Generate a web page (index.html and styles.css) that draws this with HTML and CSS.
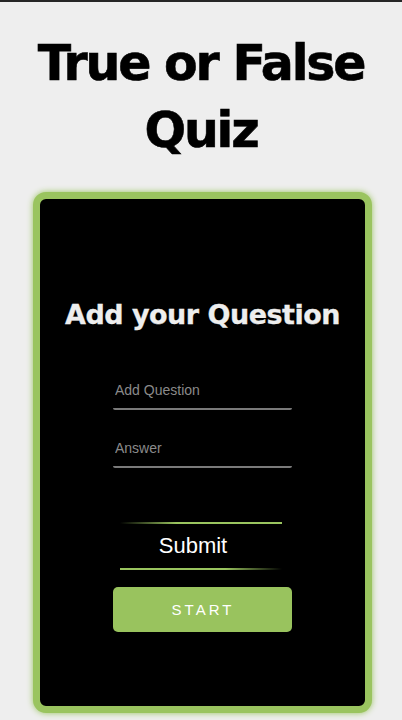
FILE: index.html
```html
<!DOCTYPE html>
<html>
<head>
<meta charset="utf-8">
<link rel="stylesheet" href="styles.css">
</head>
<body>
<div class="page">
  <h1 class="title">True or False Quiz</h1>
  <div class="card">
    <h2 class="card-title">Add your Question</h2>
    <div class="form">
      <div class="field"><input class="input" type="text" placeholder="Add Question"></div>
      <div class="field"><input class="input" type="text" placeholder="Answer"></div>
      <div class="submit">
        <span class="line line-top"></span>
        <span class="submit-text">Submit</span>
        <span class="line line-bottom"></span>
      </div>
      <button class="start">START</button>
    </div>
  </div>
</div>
</body>
</html>
```

FILE: styles.css
```css
html, body {
  margin: 0;
  padding: 0;
}
body {
  background: #eeeeee;
  border-top: 2px solid #262626;
  font-family: "Liberation Sans", Arial, sans-serif;
  height: 718px;
  overflow: hidden;
}
.page {
  display: flex;
  flex-direction: column;
  align-items: center;
}
.title {
  margin: 28px 0 0;
  width: 360px;
  text-align: center;
  font-family: "DejaVu Sans", sans-serif;
  font-weight: 700;
  font-size: 49px;
  line-height: 67px;
  color: #000;
  letter-spacing: -2.2px;
  -webkit-text-stroke: 0.6px #000;
}
.card {
  margin-top: 28px;
  margin-left: 3px;
  width: 325px;
  height: 507px;
  background: #000;
  border: 7px solid #9ac45f;
  border-radius: 13px;
  box-shadow: 0 0 6px #9ac45f;
  display: flex;
  flex-direction: column;
  align-items: center;
  box-sizing: content-box;
}
.card-title {
  margin: 100px 0 0;
  font-family: "DejaVu Sans", sans-serif;
  font-weight: 700;
  font-size: 27px;
  color: #eeeeee;
  letter-spacing: -0.5px;
  -webkit-text-stroke: 0.3px #eee;
}
.form {
  width: 179px;
  margin-top: 42px;
  display: flex;
  flex-direction: column;
}
.field {
  height: 58px;
}
.input {
  width: 100%;
  box-sizing: border-box;
  background: transparent;
  border: none;
  border-bottom: 2px solid #7a7a7a;
  border-radius: 2px;
  padding: 10px 2px 10px;
  font-family: "Liberation Sans", Arial, sans-serif;
  font-size: 14px;
  color: #fff;
  outline: none;
}
.input::placeholder {
  color: #8a8a8a;
}
.submit {
  margin-top: 34px;
  display: flex;
  flex-direction: column;
  align-items: center;
  width: 162px;
  align-self: center;
  margin-left: -3px;
}
.line {
  display: block;
  height: 2px;
  width: 100%;
}
.line-top {
  background: linear-gradient(to right, #000 0%, #9ac45f 35%, #9ac45f 100%);
}
.line-bottom {
  background: linear-gradient(to right, #9ac45f 0%, #9ac45f 65%, #000 100%);
}
.submit-text {
  color: #fff;
  font-size: 22px;
  line-height: 44px;
  margin-right: 16px;
}
.start {
  margin-top: 17px;
  height: 45px;
  width: 179px;
  background: #99c35e;
  border: none;
  border-radius: 5px;
  color: #fff;
  font-family: "Liberation Sans", Arial, sans-serif;
  font-size: 15px;
  letter-spacing: 3px;
  padding: 0 0 0 1px;
}
```
